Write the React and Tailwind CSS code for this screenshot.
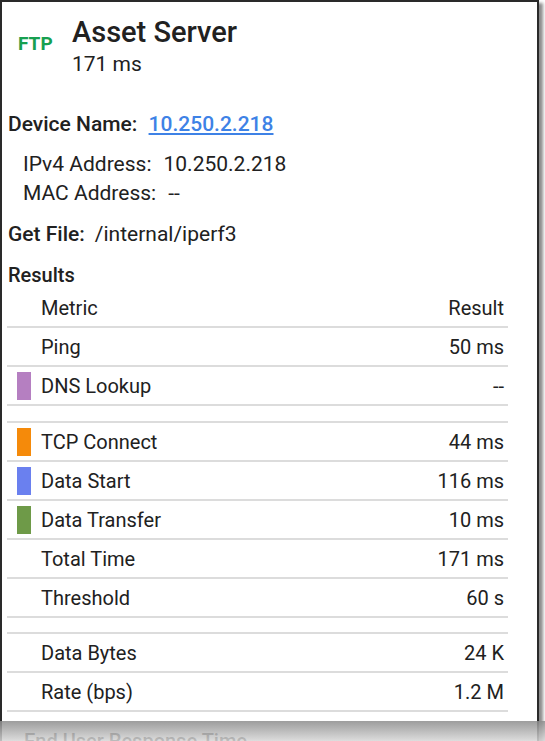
const rows = [
  { label: 'Ping', value: '50 ms' },
  { label: 'DNS Lookup', value: '--', swatch: 'bg-[#b57fc1]' },
  { gap: true },
  { label: 'TCP Connect', value: '44 ms', swatch: 'bg-[#f58a0a]' },
  { label: 'Data Start', value: '116 ms', swatch: 'bg-[#6a80ef]' },
  { label: 'Data Transfer', value: '10 ms', swatch: 'bg-[#6e9a48]' },
  { label: 'Total Time', value: '171 ms' },
  { label: 'Threshold', value: '60 s' },
  { gap: true, short: true },
  { label: 'Data Bytes', value: '24 K' },
  { label: 'Rate (bps)', value: '1.2 M' },
]

function Row({ label, value, swatch }) {
  return (
    <div className="flex h-[39px] items-center border-b-2 border-[#dcdcdc]">
      <div className="flex w-[34px] shrink-0 pl-[10px]">
        {swatch && <span className={`block h-[28px] w-[14px] ${swatch}`} />}
      </div>
      <span className="flex-1">{label}</span>
      <span className="pr-[4px]">{value}</span>
    </div>
  )
}

export default function App() {
  return (
    <div className="relative h-[741px] w-[545px] overflow-hidden bg-white font-[family-name:Roboto,sans-serif] text-[20px] leading-[24px] text-[#212121]">
      <div className="h-[760px] w-[539px] border-x-2 border-t-2 border-[#2a2a2a] bg-white shadow-[4px_3px_3px_rgba(0,0,0,0.45)]">
        {/* header */}
        <div className="flex items-center pl-[16px] pt-[14px]">
          <span className="mb-[4px] w-[54px] shrink-0 text-[19px] font-bold leading-[20px] text-[#17a050]">FTP</span>
          <div>
            <div className="text-[29px] font-medium leading-[32px]">Asset Server</div>
            <div className="mt-[4px] text-[21px] leading-[24px]">171 ms</div>
          </div>
        </div>

        <div className="mt-[36px] pl-[6px] text-[21px] font-medium">
          Device Name:{' '}
          <a href="#" className="ml-[6px] text-[#3e82e6] underline underline-offset-2">10.250.2.218</a>
        </div>

        <div className="mt-[14px] pl-[21px] text-[21px] leading-[29px]">
          <div>
            IPv4 Address:<span className="ml-[12px]">10.250.2.218</span>
          </div>
          <div>
            MAC Address:<span className="ml-[12px]">--</span>
          </div>
        </div>

        <div className="mt-[14px] pl-[6px] text-[21px]">
          <span className="font-medium">Get File:</span>
          <span className="ml-[10px]">/internal/iperf3</span>
        </div>

        <div className="mt-[17px] pl-[6px] font-medium">Results</div>

        <div className="ml-[5px] mt-[2px] w-[501px]">
          <Row label="Metric" value="Result" />
          {rows.map((r, i) =>
            r.gap ? (
              <div key={i} className={`border-b-2 border-[#dcdcdc] ${r.short ? 'h-[16px]' : 'h-[17px]'}`} />
            ) : (
              <Row key={i} {...r} />
            ),
          )}
        </div>

        <div className="mt-[17px] pl-[22px] font-medium">End User Response Time</div>
      </div>

      {/* bottom fade where the capture is cut off */}
      <div className="absolute inset-x-0 bottom-0 top-[721px] bg-gradient-to-b from-[rgba(140,140,140,0.85)] to-[rgba(215,215,215,0.85)]" />
    </div>
  )
}
